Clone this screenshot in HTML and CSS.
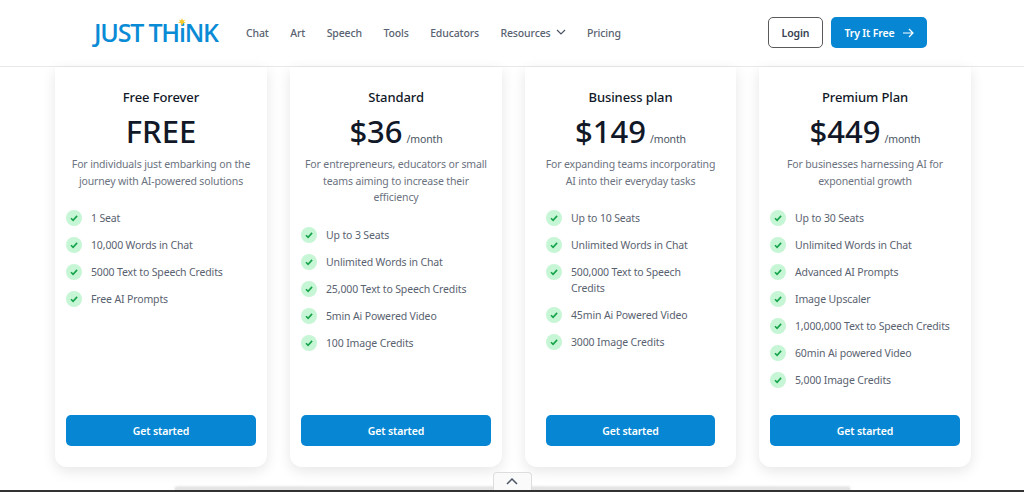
FILE: index.html
```html
<!DOCTYPE html>
<html lang="en">
<head>
    <meta charset="UTF-8">
    <meta name="viewport" content="width=device-width, initial-scale=1.0">
    <title>Just Think Pricing</title>
    <link rel="stylesheet" href="styles.css">
</head>
<body>
    <header class="topbar">
        <a class="logo" href="#">JUST TH<span class="logo-i">i<svg class="spark" width="8" height="8" viewBox="0 0 8 8"><path d="M4 0l.9 2.4L7.4 1.6 5.8 3.6 8 4.8 5.3 5 4 8 2.7 5 0 4.8l2.2-1.2L.6 1.6l2.5.8z" fill="#f5c929"/></svg></span>NK</a>
        <nav class="nav">
            <a href="#">Chat</a>
            <a href="#">Art</a>
            <a href="#">Speech</a>
            <a href="#">Tools</a>
            <a href="#">Educators</a>
            <a href="#" class="has-caret">Resources<svg width="10" height="6" viewBox="0 0 10 6"><path d="M1 1l4 4 4-4" fill="none" stroke="#4b5563" stroke-width="1.2"/></svg></a>
            <a href="#">Pricing</a>
        </nav>
        <div class="actions">
            <a class="btn-login" href="#">Login</a>
            <a class="btn-try" href="#">Try It Free
                <svg width="12" height="10" viewBox="0 0 12 10"><path d="M1 5h10M7 1l4 4-4 4" fill="none" stroke="#fff" stroke-width="1.2"/></svg>
            </a>
        </div>
    </header>

    <main class="plans">
        <section class="card">
            <h2>Free Forever</h2>
            <div class="price">FREE</div>
            <p class="blurb">For individuals just embarking on the journey with AI-powered solutions</p>
            <ul class="features">
                <li><svg class="check" viewBox="0 0 16 16"><circle cx="8" cy="8" r="8" fill="#c6f6d5"/><path d="M5 8.2l2.1 2.1 4-4.4" fill="none" stroke="#16a34a" stroke-width="1.6"/></svg>1 Seat</li>
                <li><svg class="check" viewBox="0 0 16 16"><circle cx="8" cy="8" r="8" fill="#c6f6d5"/><path d="M5 8.2l2.1 2.1 4-4.4" fill="none" stroke="#16a34a" stroke-width="1.6"/></svg>10,000 Words in Chat</li>
                <li><svg class="check" viewBox="0 0 16 16"><circle cx="8" cy="8" r="8" fill="#c6f6d5"/><path d="M5 8.2l2.1 2.1 4-4.4" fill="none" stroke="#16a34a" stroke-width="1.6"/></svg>5000 Text to Speech Credits</li>
                <li><svg class="check" viewBox="0 0 16 16"><circle cx="8" cy="8" r="8" fill="#c6f6d5"/><path d="M5 8.2l2.1 2.1 4-4.4" fill="none" stroke="#16a34a" stroke-width="1.6"/></svg>Free AI Prompts</li>
            </ul>
            <a class="btn-start" href="#">Get started</a>
        </section>

        <section class="card">
            <h2>Standard</h2>
            <div class="price">$36<span class="per">/month</span></div>
            <p class="blurb">For entrepreneurs, educators or small teams aiming to increase their efficiency</p>
            <ul class="features">
                <li><svg class="check" viewBox="0 0 16 16"><circle cx="8" cy="8" r="8" fill="#c6f6d5"/><path d="M5 8.2l2.1 2.1 4-4.4" fill="none" stroke="#16a34a" stroke-width="1.6"/></svg>Up to 3 Seats</li>
                <li><svg class="check" viewBox="0 0 16 16"><circle cx="8" cy="8" r="8" fill="#c6f6d5"/><path d="M5 8.2l2.1 2.1 4-4.4" fill="none" stroke="#16a34a" stroke-width="1.6"/></svg>Unlimited Words in Chat</li>
                <li><svg class="check" viewBox="0 0 16 16"><circle cx="8" cy="8" r="8" fill="#c6f6d5"/><path d="M5 8.2l2.1 2.1 4-4.4" fill="none" stroke="#16a34a" stroke-width="1.6"/></svg>25,000 Text to Speech Credits</li>
                <li><svg class="check" viewBox="0 0 16 16"><circle cx="8" cy="8" r="8" fill="#c6f6d5"/><path d="M5 8.2l2.1 2.1 4-4.4" fill="none" stroke="#16a34a" stroke-width="1.6"/></svg>5min Ai Powered Video</li>
                <li><svg class="check" viewBox="0 0 16 16"><circle cx="8" cy="8" r="8" fill="#c6f6d5"/><path d="M5 8.2l2.1 2.1 4-4.4" fill="none" stroke="#16a34a" stroke-width="1.6"/></svg>100 Image Credits</li>
            </ul>
            <a class="btn-start" href="#">Get started</a>
        </section>

        <section class="card card-narrow">
            <h2>Business plan</h2>
            <div class="price">$149<span class="per">/month</span></div>
            <p class="blurb">For expanding teams incorporating AI into their everyday tasks</p>
            <ul class="features">
                <li><svg class="check" viewBox="0 0 16 16"><circle cx="8" cy="8" r="8" fill="#c6f6d5"/><path d="M5 8.2l2.1 2.1 4-4.4" fill="none" stroke="#16a34a" stroke-width="1.6"/></svg>Up to 10 Seats</li>
                <li><svg class="check" viewBox="0 0 16 16"><circle cx="8" cy="8" r="8" fill="#c6f6d5"/><path d="M5 8.2l2.1 2.1 4-4.4" fill="none" stroke="#16a34a" stroke-width="1.6"/></svg>Unlimited Words in Chat</li>
                <li><svg class="check" viewBox="0 0 16 16"><circle cx="8" cy="8" r="8" fill="#c6f6d5"/><path d="M5 8.2l2.1 2.1 4-4.4" fill="none" stroke="#16a34a" stroke-width="1.6"/></svg>500,000 Text to Speech Credits</li>
                <li><svg class="check" viewBox="0 0 16 16"><circle cx="8" cy="8" r="8" fill="#c6f6d5"/><path d="M5 8.2l2.1 2.1 4-4.4" fill="none" stroke="#16a34a" stroke-width="1.6"/></svg>45min Ai Powered Video</li>
                <li><svg class="check" viewBox="0 0 16 16"><circle cx="8" cy="8" r="8" fill="#c6f6d5"/><path d="M5 8.2l2.1 2.1 4-4.4" fill="none" stroke="#16a34a" stroke-width="1.6"/></svg>3000 Image Credits</li>
            </ul>
            <a class="btn-start" href="#">Get started</a>
        </section>

        <section class="card">
            <h2>Premium Plan</h2>
            <div class="price">$449<span class="per">/month</span></div>
            <p class="blurb">For businesses harnessing AI for exponential growth</p>
            <ul class="features">
                <li><svg class="check" viewBox="0 0 16 16"><circle cx="8" cy="8" r="8" fill="#c6f6d5"/><path d="M5 8.2l2.1 2.1 4-4.4" fill="none" stroke="#16a34a" stroke-width="1.6"/></svg>Up to 30 Seats</li>
                <li><svg class="check" viewBox="0 0 16 16"><circle cx="8" cy="8" r="8" fill="#c6f6d5"/><path d="M5 8.2l2.1 2.1 4-4.4" fill="none" stroke="#16a34a" stroke-width="1.6"/></svg>Unlimited Words in Chat</li>
                <li><svg class="check" viewBox="0 0 16 16"><circle cx="8" cy="8" r="8" fill="#c6f6d5"/><path d="M5 8.2l2.1 2.1 4-4.4" fill="none" stroke="#16a34a" stroke-width="1.6"/></svg>Advanced AI Prompts</li>
                <li><svg class="check" viewBox="0 0 16 16"><circle cx="8" cy="8" r="8" fill="#c6f6d5"/><path d="M5 8.2l2.1 2.1 4-4.4" fill="none" stroke="#16a34a" stroke-width="1.6"/></svg>Image Upscaler</li>
                <li><svg class="check" viewBox="0 0 16 16"><circle cx="8" cy="8" r="8" fill="#c6f6d5"/><path d="M5 8.2l2.1 2.1 4-4.4" fill="none" stroke="#16a34a" stroke-width="1.6"/></svg>1,000,000 Text to Speech Credits</li>
                <li><svg class="check" viewBox="0 0 16 16"><circle cx="8" cy="8" r="8" fill="#c6f6d5"/><path d="M5 8.2l2.1 2.1 4-4.4" fill="none" stroke="#16a34a" stroke-width="1.6"/></svg>60min Ai powered Video</li>
                <li><svg class="check" viewBox="0 0 16 16"><circle cx="8" cy="8" r="8" fill="#c6f6d5"/><path d="M5 8.2l2.1 2.1 4-4.4" fill="none" stroke="#16a34a" stroke-width="1.6"/></svg>5,000 Image Credits</li>
            </ul>
            <a class="btn-start" href="#">Get started</a>
        </section>
    </main>

    <footer class="dock">
        <div class="dock-tab">
            <svg width="12" height="7" viewBox="0 0 12 7"><path d="M1 6l5-5 5 5" fill="none" stroke="#4b5563" stroke-width="1.5"/></svg>
        </div>
    </footer>
</body>
</html>
```

FILE: styles.css
```css
/* page */
html, body {
    height: 100%;
}

body {
    margin: 0;
    height: 492px;
    overflow: hidden;
    display: flex;
    flex-direction: column;
    background-color: #fff;
    font-family: "Noto Sans", "Open Sans", sans-serif;
    font-size: 10.5px;
    letter-spacing: -0.14px;
    color: #4b5563;
}

a {
    text-decoration: none;
    color: inherit;
}

/* header */
.topbar {
    height: 66px;
    flex: none;
    display: flex;
    align-items: center;
    padding-left: 94px;
    padding-right: 97px;
    border-bottom: 1px solid #e9e9e9;
}

.logo {
    width: 152px;
    margin-bottom: 3px;
    font-family: "Open Sans", sans-serif;
    font-size: 25px;
    font-weight: 600;
    letter-spacing: -1.2px;
    color: #0a8bd6;
    white-space: nowrap;
}

.logo-i {
    position: relative;
}

.spark {
    position: absolute;
    left: -1px;
    top: 3px;
}

.nav {
    display: flex;
    gap: 21.5px;
    font-weight: 500;
    color: #596270;
}

.has-caret svg {
    margin-left: 5px;
    vertical-align: 2px;
}

.actions {
    display: flex;
    gap: 8px;
    margin-left: auto;
    margin-bottom: 1px;
    font-weight: 600;
}

.btn-login,
.btn-try {
    height: 31px;
    display: flex;
    align-items: center;
    justify-content: center;
    box-sizing: border-box;
    border-radius: 5px;
}

.btn-login {
    width: 55px;
    border: 1.5px solid #5a5a5a;
    color: #374151;
}

.btn-try {
    width: 96px;
    gap: 7px;
    background-color: #0787d3;
    color: #fff;
}

/* pricing cards */
.plans {
    flex: 1;
    display: grid;
    grid-template-columns: 212px 212px 211px 212px;
    gap: 23px;
    padding: 0 0 25px 55px;
    min-height: 0;
}

.card {
    display: flex;
    flex-direction: column;
    padding: 21px 11px 21px;
    background-color: #fff;
    border-radius: 0 0 12px 12px;
    box-shadow: 0 4px 14px rgba(0, 0, 0, 0.1);
    text-align: center;
}

.card-narrow {
    padding-left: 21px;
    padding-right: 21px;
}

.card-narrow .blurb {
    margin-left: -4px;
    margin-right: -4px;
}

.card h2 {
    margin: 0;
    font-size: 13px;
    line-height: 18px;
    letter-spacing: -0.1px;
    font-weight: 500;
    color: #111827;
}

.price {
    margin-top: 6px;
    font-size: 31px;
    line-height: 38px;
    letter-spacing: 0;
    font-weight: 500;
    color: #111827;
}

.per {
    margin-left: 4px;
    font-size: 10.5px;
    line-height: 1;
    letter-spacing: -0.14px;
    font-weight: 400;
    color: #4b5563;
}

.blurb {
    margin: 6px 0 0;
    line-height: 16.5px;
    color: #6b7280;
}

.features {
    list-style: none;
    margin: 21px 0 0;
    padding: 0;
    display: flex;
    flex-direction: column;
    gap: 11px;
    text-align: left;
    line-height: 16px;
    color: #596270;
}

.features li {
    display: flex;
    gap: 9px;
}

.check {
    width: 16px;
    height: 16px;
    flex: none;
}

.btn-start {
    margin-top: auto;
    height: 31px;
    display: flex;
    align-items: center;
    justify-content: center;
    background-color: #0787d3;
    border-radius: 5px;
    color: #fff;
    font-weight: 600;
}

/* bottom edge */
.dock {
    position: absolute;
    left: 0;
    right: 0;
    top: 472px;
    height: 20px;
    display: flex;
    justify-content: center;
    border-bottom: 2px solid #333;
    box-sizing: border-box;
}

.dock::before {
    content: "";
    position: absolute;
    left: 175px;
    width: 675px;
    bottom: 0;
    height: 2px;
    background-color: #e4e4e4;
    box-shadow: 0 -1px 3px rgba(0, 0, 0, 0.2);
}

.dock-tab {
    position: relative;
    width: 39px;
    height: 18px;
    display: flex;
    align-items: center;
    justify-content: center;
    background-color: #fafafa;
    border: 1px solid #ddd;
    border-bottom: none;
    border-radius: 4px 4px 0 0;
    box-sizing: border-box;
}
```
